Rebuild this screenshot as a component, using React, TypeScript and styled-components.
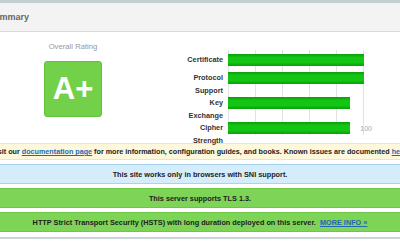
import styled, { createGlobalStyle } from "styled-components";

const GlobalStyle = createGlobalStyle`
  html, body {
    margin: 0;
    padding: 0;
    background: #fff;
    overflow: hidden;
  }
  body {
    font-family: "Liberation Sans", Arial, sans-serif;
    color: #333;
  }
`;

interface Metric {
  label: string[];
  score: number;
}

const METRICS: Metric[] = [
  { label: ["Certificate"], score: 100 },
  { label: ["Protocol", "Support"], score: 100 },
  { label: ["Key", "Exchange"], score: 90 },
  { label: ["Cipher", "Strength"], score: 90 },
];

export default function App() {
  return (
    <>
      <GlobalStyle />
      <Page>
        <Header>Summary</Header>
        <SummaryBody>
          <RatingColumn>
            <RatingLabel>Overall Rating</RatingLabel>
            <GradeBox>A+</GradeBox>
          </RatingColumn>
          <Chart>
            <GridLines />
            {METRICS.map((m, i) => (
              <MetricRow key={m.label.join()} $row={i + 1} $tall={m.label.length > 1}>
                <MetricLabel>
                  {m.label.map((l) => (
                    <div key={l}>{l}</div>
                  ))}
                </MetricLabel>
                <Bar style={{ width: `${m.score}%` }} />
              </MetricRow>
            ))}
            <AxisLabel>100</AxisLabel>
          </Chart>
        </SummaryBody>
        <Messages>
          <MessageBox $kind="info" $size={7.2}>
            <span>
              Visit our <Link href="#">documentation page</Link> for more information, configuration guides, and
              books. Known issues are documented <Link href="#">here</Link>.
            </span>
          </MessageBox>
          <MessageBox $kind="note" $tall>
            <span>This site works only in browsers with SNI support.</span>
          </MessageBox>
          <MessageBox $kind="good" $tall>
            <span>This server supports TLS 1.3.</span>
          </MessageBox>
          <MessageBox $kind="good" $tall>
            <span>
              HTTP Strict Transport Security (HSTS) with long duration deployed on this server.&nbsp;&nbsp;
              <Link href="#">MORE INFO »</Link>
            </span>
          </MessageBox>
        </Messages>
        <Footer />
      </Page>
    </>
  );
}

const Page = styled.div`
  width: 460px;
  margin-left: -30px;
`;

const Header = styled.div`
  height: 28px;
  border-top: 3px solid #c4cfcf;
  border-bottom: 1px solid #dadada;
  background: #f3f3f3;
  padding-left: 18px;
  display: flex;
  align-items: center;
  font-size: 9px;
  font-weight: bold;
  color: #666;
`;

const SummaryBody = styled.div`
  position: relative;
  z-index: 1;
  display: flex;
  align-items: flex-start;
  padding-left: 48px;
`;

const RatingColumn = styled.div`
  width: 110px;
  padding-top: 10px;
  display: flex;
  flex-direction: column;
  align-items: center;
`;

const RatingLabel = styled.div`
  font-size: 7.7px;
  line-height: 10px;
  color: #999;
  margin-bottom: 9px;
`;

const GradeBox = styled.div`
  width: 56px;
  height: 54px;
  border: 1px solid #62c23c;
  border-radius: 3px;
  background: #72d148;
  color: #fff;
  font-size: 31px;
  font-weight: bold;
  display: flex;
  align-items: center;
  justify-content: center;
`;

const Chart = styled.div`
  margin-top: 18px;
  margin-left: 35px;
  padding-top: 4px;
  display: grid;
  grid-template-columns: 60px 136px;
  column-gap: 5px;
`;

const GridLines = styled.div`
  grid-column: 2;
  grid-row: 1 / span 4;
  align-self: start;
  margin-top: -4px;
  height: 85px;
  border-left: 1px solid #e2e2e2;
  background-image: linear-gradient(to right, transparent calc(100% - 1px), #e2e2e2 calc(100% - 1px));
  background-size: 20% 100%;
  background-repeat: repeat-x;
`;

const MetricRow = styled.div<{ $row: number; $tall: boolean }>`
  grid-column: 1 / span 2;
  grid-row: ${({ $row }) => $row};
  display: grid;
  grid-template-columns: 60px 136px;
  column-gap: 5px;
  align-items: start;
  height: ${({ $tall }) => ($tall ? "25px" : "18px")};
`;

const MetricLabel = styled.div`
  text-align: right;
  font-size: 7.3px;
  font-weight: bold;
  line-height: 12.5px;
  color: #333;
`;

const Bar = styled.div`
  height: 12px;
  background: linear-gradient(to bottom, #0a9e0a 0%, #14c614 30%, #14c614 70%, #0a9e0a 100%);
`;

const AxisLabel = styled.div`
  grid-column: 2;
  grid-row: 4;
  justify-self: end;
  margin-right: -8px;
  margin-top: 2px;
  font-size: 7px;
  color: #aaa;
  line-height: 10px;
`;

const Messages = styled.div`
  display: flex;
  flex-direction: column;
  gap: 4px;
  margin-top: -4px;
`;

const KIND_COLORS = {
  info: { bg: "#fdf8dc", border: "#efe6bd" },
  note: { bg: "#d5ecfb", border: "#a8d3ef" },
  good: { bg: "#7dd456", border: "#6cc745" },
};

const MessageBox = styled.div<{ $kind: keyof typeof KIND_COLORS; $tall?: boolean; $size?: number }>`
  height: ${({ $tall }) => ($tall ? "18px" : "15px")};
  background: ${({ $kind }) => KIND_COLORS[$kind].bg};
  border-top: 1px solid ${({ $kind }) => KIND_COLORS[$kind].border};
  border-bottom: 1px solid ${({ $kind }) => KIND_COLORS[$kind].border};
  display: flex;
  align-items: center;
  justify-content: center;
  white-space: nowrap;
  font-size: ${({ $size }) => $size ?? 7.3}px;
  font-weight: bold;
  color: #222;
`;

const Link = styled.a`
  color: #2467b4;
  text-decoration: underline;
`;

const Footer = styled.div`
  margin-top: 5px;
  height: 2px;
  border-top: 2px solid #cbd4d4;
`;
